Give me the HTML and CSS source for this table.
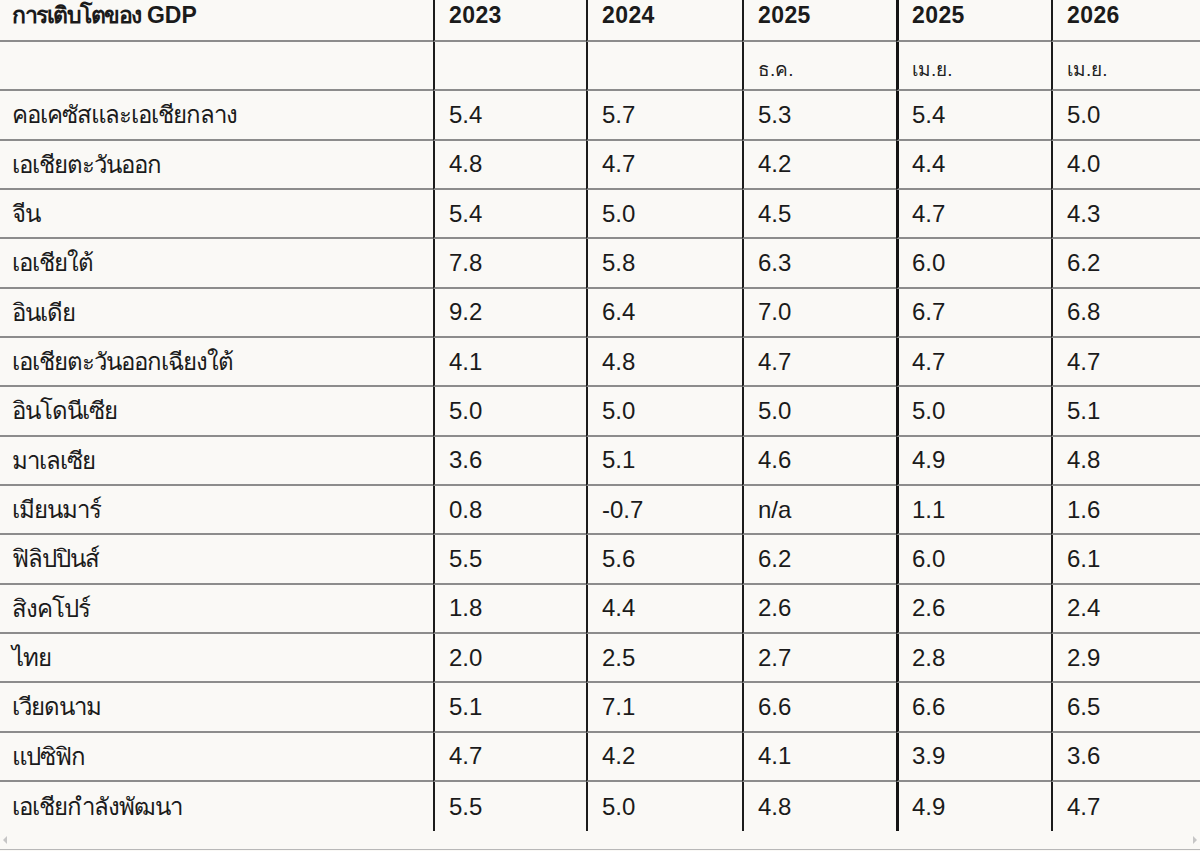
FILE: index.html
```html
<!DOCTYPE html>
<html lang="th">
<head>
<meta charset="utf-8">
<title>การเติบโตของ GDP</title>
<link rel="stylesheet" href="styles.css">
</head>
<body>
<div class="scroller">
  <div class="grid">
    <div class="cell head first"><span class="th">การเติบโตของ</span>&nbsp;GDP</div>
    <div class="cell head">2023</div>
    <div class="cell head">2024</div>
    <div class="cell head">2025</div>
    <div class="cell head apr">2025</div>
    <div class="cell head">2026</div>

    <div class="cell sub first"></div>
    <div class="cell sub"></div>
    <div class="cell sub"></div>
    <div class="cell sub">ธ.ค.</div>
    <div class="cell sub apr">เม.ย.</div>
    <div class="cell sub">เม.ย.</div>

    <div class="cell first">คอเคซัสและเอเชียกลาง</div><div class="cell">5.4</div><div class="cell">5.7</div><div class="cell">5.3</div><div class="cell apr">5.4</div><div class="cell">5.0</div>
    <div class="cell first">เอเชียตะวันออก</div><div class="cell">4.8</div><div class="cell">4.7</div><div class="cell">4.2</div><div class="cell apr">4.4</div><div class="cell">4.0</div>
    <div class="cell first">จีน</div><div class="cell">5.4</div><div class="cell">5.0</div><div class="cell">4.5</div><div class="cell apr">4.7</div><div class="cell">4.3</div>
    <div class="cell first">เอเชียใต้</div><div class="cell">7.8</div><div class="cell">5.8</div><div class="cell">6.3</div><div class="cell apr">6.0</div><div class="cell">6.2</div>
    <div class="cell first">อินเดีย</div><div class="cell">9.2</div><div class="cell">6.4</div><div class="cell">7.0</div><div class="cell apr">6.7</div><div class="cell">6.8</div>
    <div class="cell first">เอเชียตะวันออกเฉียงใต้</div><div class="cell">4.1</div><div class="cell">4.8</div><div class="cell">4.7</div><div class="cell apr">4.7</div><div class="cell">4.7</div>
    <div class="cell first">อินโดนีเซีย</div><div class="cell">5.0</div><div class="cell">5.0</div><div class="cell">5.0</div><div class="cell apr">5.0</div><div class="cell">5.1</div>
    <div class="cell first">มาเลเซีย</div><div class="cell">3.6</div><div class="cell">5.1</div><div class="cell">4.6</div><div class="cell apr">4.9</div><div class="cell">4.8</div>
    <div class="cell first">เมียนมาร์</div><div class="cell">0.8</div><div class="cell">-0.7</div><div class="cell">n/a</div><div class="cell apr">1.1</div><div class="cell">1.6</div>
    <div class="cell first">ฟิลิปปินส์</div><div class="cell">5.5</div><div class="cell">5.6</div><div class="cell">6.2</div><div class="cell apr">6.0</div><div class="cell">6.1</div>
    <div class="cell first">สิงคโปร์</div><div class="cell">1.8</div><div class="cell">4.4</div><div class="cell">2.6</div><div class="cell apr">2.6</div><div class="cell">2.4</div>
    <div class="cell first">ไทย</div><div class="cell">2.0</div><div class="cell">2.5</div><div class="cell">2.7</div><div class="cell apr">2.8</div><div class="cell">2.9</div>
    <div class="cell first">เวียดนาม</div><div class="cell">5.1</div><div class="cell">7.1</div><div class="cell">6.6</div><div class="cell apr">6.6</div><div class="cell">6.5</div>
    <div class="cell first">แปซิฟิก</div><div class="cell">4.7</div><div class="cell">4.2</div><div class="cell">4.1</div><div class="cell apr">3.9</div><div class="cell">3.6</div>
    <div class="cell first last">เอเชียกำลังพัฒนา</div><div class="cell last">5.5</div><div class="cell last">5.0</div><div class="cell last">4.8</div><div class="cell last apr">4.9</div><div class="cell last">4.7</div>
  </div>
  <div class="scrollbar">
    <span class="arrow arrow-left"></span>
    <span class="arrow arrow-right"></span>
  </div>
</div>
</body>
</html>
```

FILE: styles.css
```css
html, body {
  margin: 0;
  padding: 0;
  background: #faf9f6;
}

body {
  font-family: "Liberation Sans", Arial, sans-serif;
  color: #1b1b1b;
  width: 1200px;
  height: 851px;
  overflow: hidden;
}

.scroller {
  width: 1200px;
  overflow: hidden;
  border-bottom: 1px solid #b8b8b8;
}

.grid {
  display: grid;
  width: 1251px;
  grid-template-columns: 433px 153px 156px 154px 155px 200px;
  grid-template-rows: 42px repeat(16, 49.33px);
}

.cell {
  box-sizing: border-box;
  display: flex;
  align-items: center;
  padding-left: 14px;
  font-size: 24px;
  border-left: 2px solid #1c1c1c;
  border-bottom: 2px solid #8c8c8c;
  white-space: nowrap;
}

.cell.apr {
  border-left: 3px solid #141414;
  padding-left: 13px;
}

.cell.first {
  border-left: none;
  padding-left: 12px;
  letter-spacing: -1px;
}

.cell.last {
  border-bottom: none;
}

.cell.head {
  align-items: flex-start;
  font-weight: bold;
  font-size: 23px;
  line-height: 30px;
  letter-spacing: 0.4px;
}

.cell.head.first {
  letter-spacing: 0;
}

.cell.head.first .th {
  letter-spacing: -1.5px;
}

.cell.sub {
  font-size: 19px;
  padding-top: 6px;
  color: #222;
}

.scrollbar {
  height: 18px;
  display: flex;
  justify-content: space-between;
  align-items: center;
  padding: 0 3px;
}

.arrow {
  width: 0;
  height: 0;
  border-top: 4px solid transparent;
  border-bottom: 4px solid transparent;
}

.arrow-left {
  border-right: 4px solid #c6c6c6;
}

.arrow-right {
  border-left: 4px solid #c6c6c6;
}
```
